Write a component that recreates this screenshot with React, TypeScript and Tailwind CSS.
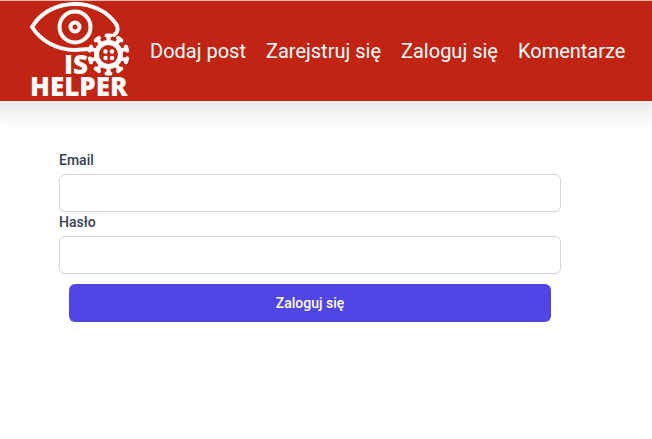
const links = ["Dodaj post", "Zarejstruj się", "Zaloguj się", "Komentarze"];

const spikes = [0, 36, 72, 108, 144, 180, 216, 252, 288, 324];

function Logo() {
  return (
    <svg viewBox="0 0 100 100" className="size-[100px] overflow-visible" role="img" aria-label="IS Helper">
      <g fill="none" stroke="#fff" strokeWidth="4" strokeLinecap="round">
        <path d="M84 34C88 31 89 27 86 23C78 11 63 3 45 3C27 3 11 11 2 26C11 40 27 49 45 49C50 49 54 48 60 48" />
        <circle cx="45" cy="26" r="15.5" />
        <circle cx="45" cy="26" r="4.5" />
      </g>
      <g fill="#fff" fontFamily="'Open Sans', 'Noto Sans', sans-serif" fontWeight="800" fontSize="26">
        <text x="34" y="73">IS</text>
        <text x="0" y="95">HELPER</text>
      </g>
      <circle cx="78.5" cy="53.5" r="16" fill="#c12412" />
      <g fill="none" stroke="#fff" strokeLinecap="round">
        <circle cx="78.5" cy="53.5" r="12" strokeWidth="5" />
        {spikes.map((angle) => (
          <path
            key={angle}
            d="M78.5 41V35M76.5 34.5H80.5"
            strokeWidth="4"
            transform={`rotate(${angle} 78.5 53.5)`}
          />
        ))}
      </g>
      <g fill="#fff">
        <circle cx="75.5" cy="50.5" r="2.2" />
        <circle cx="82" cy="50.5" r="2.2" />
        <circle cx="75.5" cy="57" r="2.2" />
        <circle cx="82" cy="57" r="2.2" />
      </g>
    </svg>
  );
}

function Field({ id, label, type }: { id: string; label: string; type: string }) {
  return (
    <div>
      <label htmlFor={id} className="block text-sm font-medium text-gray-700">
        {label}
      </label>
      <input
        id={id}
        name={id}
        type={type}
        className="mt-1 block h-[38px] w-full rounded-md border border-gray-300 bg-white px-3 text-sm shadow-xs"
      />
    </div>
  );
}

export default function App() {
  return (
    <div className="font-[Roboto,sans-serif]">
      <header className="flex items-center border-t border-[#e9b9a8] bg-[#c12412] pl-[30px] shadow-[0_0_20px_12px_rgba(0,0,0,0.1)]">
        <a href="#" className="shrink-0">
          <Logo />
        </a>
        <nav className="ml-5 flex gap-5 text-xl whitespace-nowrap text-white">
          {links.map((link) => (
            <a key={link} href="#">
              {link}
            </a>
          ))}
        </nav>
      </header>
      <main className="pt-[49px] pr-[91px] pl-[59px]">
        <form>
          <Field id="email" label="Email" type="email" />
          <Field id="password" label="Hasło" type="password" />
          <div className="p-2.5">
            <button
              type="submit"
              className="block h-[38px] w-full rounded-md bg-[#4f46e5] text-sm font-medium text-white"
            >
              Zaloguj się
            </button>
          </div>
        </form>
      </main>
    </div>
  );
}
